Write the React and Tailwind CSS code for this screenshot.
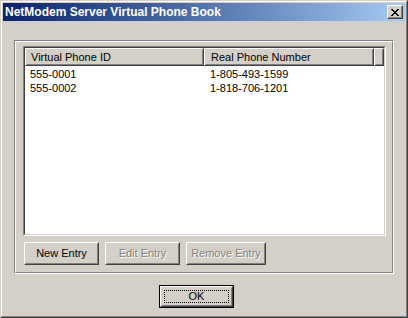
import React from "react";

const font = { fontFamily: '"Liberation Sans", Arial, sans-serif' };

function Btn({ children, disabled, className = "" }) {
  return (
    <div className={`border border-t-white border-l-white border-r-[#404040] border-b-[#404040] ${className}`}>
      <div className="h-full w-full border border-t-[#d4d0c8] border-l-[#d4d0c8] border-r-[#808080] border-b-[#808080] bg-[#d4d0c8] flex items-center justify-center text-[11px]">
        <span className={disabled ? "text-[#808080] [text-shadow:1px_1px_0_#fff]" : "text-black"}>{children}</span>
      </div>
    </div>
  );
}

function HeaderCell({ children, className = "" }) {
  return (
    <div className={`h-full border border-t-white border-l-white border-r-[#404040] border-b-[#404040] ${className}`}>
      <div className="h-full border border-t-[#d4d0c8] border-l-[#d4d0c8] border-r-[#808080] border-b-[#808080] bg-[#d4d0c8] flex items-center text-[11px] text-black">
        {children}
      </div>
    </div>
  );
}

export default function App() {
  const rows = [
    ["555-0001", "1-805-493-1599"],
    ["555-0002", "1-818-706-1201"],
  ];
  return (
    <div style={font} className="w-[408px] h-[318px] border border-t-[#d4d0c8] border-l-[#d4d0c8] border-r-[#404040] border-b-[#404040] bg-[#d4d0c8]">
      <div className="w-full h-full border border-t-white border-l-white border-r-[#808080] border-b-[#808080] p-[1px] flex flex-col">
        {/* Title bar */}
        <div className="h-[18px] flex items-center justify-between bg-gradient-to-r from-[#0a246a] to-[#a6caf0] pl-[2px] pr-[2px]">
          <span className="text-white font-bold text-[12px] leading-none">NetModem Server Virtual Phone Book</span>
          <div className="w-[16px] h-[14px] border border-t-white border-l-white border-r-[#404040] border-b-[#404040]">
            <div className="w-full h-full border border-t-[#d4d0c8] border-l-[#d4d0c8] border-r-[#808080] border-b-[#808080] bg-[#d4d0c8] flex items-center justify-center">
              <svg width="8" height="7" viewBox="0 0 8 7" shapeRendering="crispEdges">
                <path d="M0 0h2v1h-2zM6 0h2v1h-2zM1 1h2v1h-2zM5 1h2v1h-2zM2 2h4v1h-4zM3 3h2v1h-2zM2 4h4v1h-4zM1 5h2v1h-2zM5 5h2v1h-2zM0 6h2v1h-2zM6 6h2v1h-2z" fill="#000" />
              </svg>
            </div>
          </div>
        </div>

        {/* Group box */}
        <div className="mt-[19px] ml-[11px] w-[380px] h-[234px] border border-t-[#808080] border-l-[#808080] border-r-white border-b-white">
          <div className="w-full h-full border border-t-white border-l-white border-r-[#808080] border-b-[#808080] pl-[7px] pt-[4px] flex flex-col">
            {/* List view */}
            <div className="w-[363px] h-[190px] border border-t-[#808080] border-l-[#808080] border-r-white border-b-white">
              <div className="w-full h-full border border-t-[#404040] border-l-[#404040] border-r-[#d4d0c8] border-b-[#d4d0c8] bg-white flex flex-col">
                <div className="h-[18px] flex shrink-0">
                  <HeaderCell className="w-[179px]"><span className="pl-[4px]">Virtual Phone ID</span></HeaderCell>
                  <HeaderCell className="w-[170px]"><span className="pl-[5px]">Real Phone Number</span></HeaderCell>
                  <HeaderCell className="flex-1"><span /></HeaderCell>
                </div>
                <div className="pt-[1px]">
                  {rows.map((r) => (
                    <div key={r[0]} className="h-[14px] flex items-center text-[11px] text-black">
                      <span className="w-[179px] pl-[5px]">{r[0]}</span>
                      <span className="pl-[6px]">{r[1]}</span>
                    </div>
                  ))}
                </div>
              </div>
            </div>
            {/* Buttons */}
            <div className="mt-[6px] ml-[1px] flex gap-[6px]">
              <Btn className="w-[75px] h-[23px]">New Entry</Btn>
              <Btn disabled className="w-[75px] h-[23px]">Edit Entry</Btn>
              <Btn disabled className="w-[80px] h-[23px]">Remove Entry</Btn>
            </div>
          </div>
        </div>

        {/* OK button */}
        <div className="mt-[11px] ml-[156px] w-[75px] h-[23px] border border-black">
          <div className="w-full h-full border border-t-white border-l-white border-r-[#404040] border-b-[#404040]">
            <div className="w-full h-full border border-t-[#d4d0c8] border-l-[#d4d0c8] border-r-[#808080] border-b-[#808080] bg-[#d4d0c8] p-[2px]">
              <div className="w-full h-full border border-dotted border-black flex items-center justify-center text-[11px] text-black">
                OK
              </div>
            </div>
          </div>
        </div>
      </div>
    </div>
  );
}
